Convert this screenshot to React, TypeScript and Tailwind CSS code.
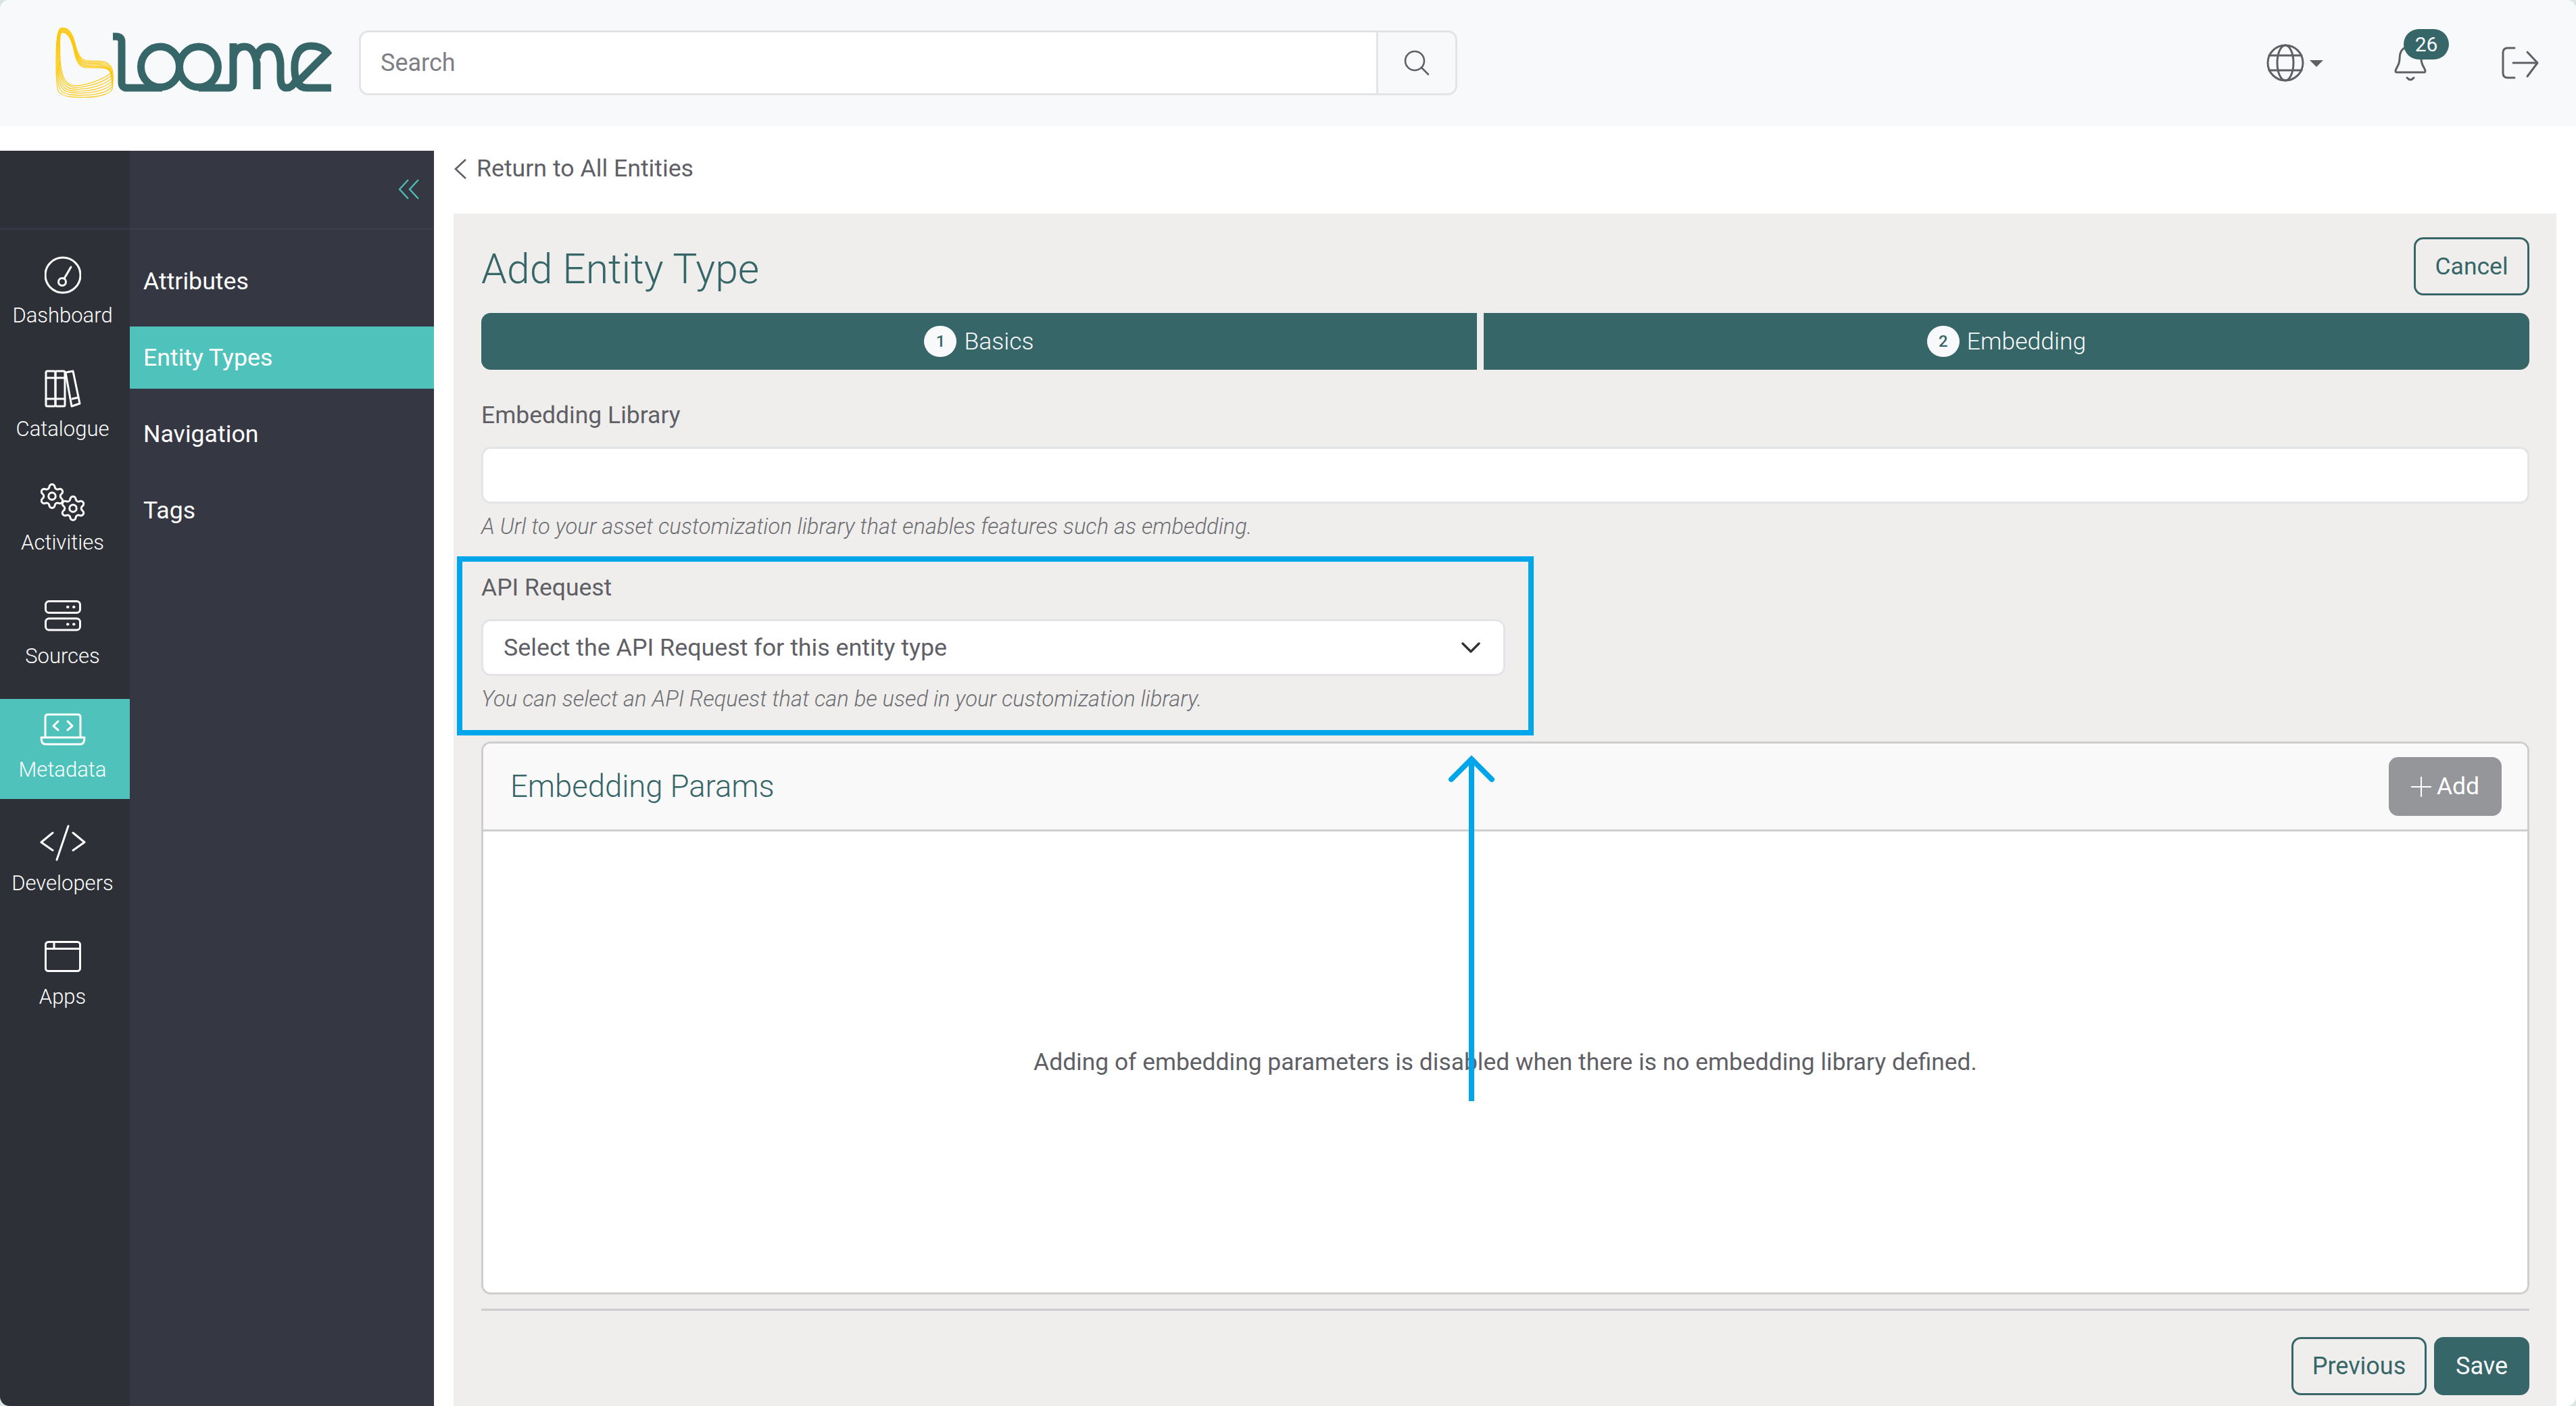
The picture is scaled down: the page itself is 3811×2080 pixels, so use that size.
import React from "react";
import { Settings } from "lucide-react";

const mix = (a: number[], b: number[], t: number) => a.map((v, i) => +(v + (b[i] - v) * t).toFixed(1));
const A = [92,39, 84,39,83,60,83,95, 83,115,84,125,86,133, 92,142,110,142,125,142, 150,142,165,135,166,130, 168,115,168,105,165,98, 160,88,150,88,135,88, 122,88,118,85,113,70, 108,50,104,39,92,39];
const B = [92,46, 88,46,88,58,89,85, 90,105,95,122,107,124, 112,125,118,125,125,123, 140,120,155,113,165,106, 163,102,160,100,155,99, 150,98,140,98,128,98, 118,98,113,90,110,75, 106,55,100,46,92,46];
const ribbon = (t: number) => {
  const p = mix(A, B, t);
  let d = `M${p[0]} ${p[1]}`;
  for (let i = 2; i < p.length; i += 6) d += `C${p[i]} ${p[i + 1]} ${p[i + 2]} ${p[i + 3]} ${p[i + 4]} ${p[i + 5]}`;
  return d + "Z";
};

function Logo() {
  return (
    <svg width="420" height="110" viewBox="80 36 420 110" fill="none" className="shrink-0">
      {[0, 0.17, 0.34, 0.5, 0.67, 0.84, 1].map((t) => (
        <path key={t} d={ribbon(t)} stroke="#fdc600" strokeWidth="1.1" />
      ))}
      <g stroke="#366668" strokeWidth="11" strokeLinecap="butt">
        <path d="M167 52H172Q180 52 180 60V120Q180 128 188 128H240" />
        <ellipse cx="237" cy="97" rx="28.5" ry="30" />
        <ellipse cx="294" cy="97" rx="28.5" ry="30" />
        <path d="M294 128H338Q345 128 345 120V62" />
        <path d="M345 84Q348 67 362 67T380 92V130" />
        <path d="M380 84Q383 67 398 67T415 92V112Q415 128 424 128Q432 128 437 118" />
        <path d="M443 117L484 76Q476 66 460 66Q439 66 436 92Q434 128 454 128H490" />
      </g>
    </svg>
  );
}

const stroke = { fill: "none", stroke: "currentColor", strokeWidth: 3, strokeLinecap: "round", strokeLinejoin: "round" } as const;

function DashIcon() {
  return (
    <svg width="54" height="56" viewBox="0 0 54 56" {...stroke}>
      <circle cx="27" cy="28" r="26" />
      <circle cx="26" cy="38" r="5.5" />
      <path d="M29 33L39 16" />
    </svg>
  );
}
function BooksIcon() {
  return (
    <svg width="54" height="56" viewBox="0 0 54 56" {...stroke}>
      <rect x="2" y="2" width="14" height="52" rx="2" />
      <rect x="16" y="2" width="14" height="52" rx="2" />
      <path d="M2 12H30M2 43H30" />
      <path d="M31 4L42 2L52 50L40 54Z" />
      <path d="M41 43L50 41" />
    </svg>
  );
}
function GearsIcon() {
  return (
    <svg width="68" height="56" viewBox="0 0 68 56" {...stroke}>
      <Settings x="-3" y="-2" width="42" height="42" strokeWidth="1.7" />
      <Settings x="28" y="16" width="42" height="42" strokeWidth="1.7" />
    </svg>
  );
}
function ServerIcon() {
  return (
    <svg width="54" height="46" viewBox="0 0 54 46" {...stroke}>
      <rect x="1.5" y="1.5" width="51" height="17" rx="5" />
      <rect x="1.5" y="27" width="51" height="17" rx="5" />
      <path d="M34 10H34.5M43 10H43.5M34 35.5H34.5M43 35.5H43.5" strokeWidth="4" />
    </svg>
  );
}
function LaptopIcon() {
  return (
    <svg width="68" height="48" viewBox="0 0 68 48" {...stroke}>
      <path d="M8 34V6Q8 2 12 2H56Q60 2 60 6V34" />
      <path d="M2 36H66Q66 46 60 46H8Q2 46 2 36Z" />
      <path d="M27 12L20 19L27 25M41 12L48 19L41 25" />
    </svg>
  );
}
function CodeIcon() {
  return (
    <svg width="68" height="54" viewBox="0 0 68 54" {...stroke}>
      <path d="M19 12L2 26L19 38M49 12L66 26L49 38M42 2L25 52" />
    </svg>
  );
}
function AppsIcon() {
  return (
    <svg width="54" height="46" viewBox="0 0 54 46" {...stroke}>
      <rect x="1.5" y="1.5" width="51" height="43" rx="4" />
      <path d="M1.5 11.5H52.5M14 1.5V11.5" />
    </svg>
  );
}

const rail = [
  { label: "Dashboard", Icon: DashIcon },
  { label: "Catalogue", Icon: BooksIcon },
  { label: "Activities", Icon: GearsIcon },
  { label: "Sources", Icon: ServerIcon },
  { label: "Metadata", Icon: LaptopIcon, active: true },
  { label: "Developers", Icon: CodeIcon },
  { label: "Apps", Icon: AppsIcon },
];
const sub = ["Attributes", "Entity Types", "Navigation", "Tags"];

function Step({ n, label, className }: { n: number; label: string; className: string }) {
  return (
    <div className={`h-full flex items-center justify-center gap-[11px] bg-[#366668] text-[#f8f9fb] text-[35.5px] font-light ${className}`}>
      <span className="w-[48px] h-[46px] rounded-full bg-[#f8f9fb] text-[#366668] text-[24px] font-medium flex items-center justify-center">{n}</span>
      <span className="pt-[2px]">{label}</span>
    </div>
  );
}

export default function App() {
  return (
    <div className="w-full h-[2080px] bg-[#dbe5e6]">
      <div className="h-full rounded-[14px] bg-white overflow-hidden flex flex-col text-[#5f6066] font-['Roboto',sans-serif]">
        <header className="h-[186px] shrink-0 bg-[#f8f9fb] flex items-center pl-[80px] pr-[54px]">
          <Logo />
          <div className="ml-[31px] w-[1625px] h-[96px] rounded-[14px] border-[3px] border-[#e3e4e8] flex items-stretch overflow-hidden">
            <div className="flex-1 pl-[29px] bg-white flex items-center text-[36px] font-normal text-[#7f8085]">Search</div>
            <div className="w-[117px] border-l-[3px] border-[#e3e4e8] flex items-center justify-center">
              <svg width="38" height="38" viewBox="0 0 38 38" fill="none" stroke="#5f6066" strokeWidth="2.6" strokeLinecap="round">
                <circle cx="16" cy="16" r="14" />
                <path d="M26 26L36 36" />
              </svg>
            </div>
          </div>
          <div className="ml-auto flex items-center">
            <svg width="56" height="56" viewBox="0 0 56 56" {...stroke}>
              <circle cx="28" cy="28" r="26" />
              <ellipse cx="28" cy="28" rx="12" ry="26" />
              <path d="M4 17H52M4 39H52" />
            </svg>
            <svg width="20" height="10" viewBox="0 0 20 10" className="ml-[8px] mt-[2px]">
              <path d="M0 0H20L10 10Z" fill="#5f6066" />
            </svg>
            <div className="relative ml-[105px] w-[48px] h-[56px]">
              <svg width="48" height="56" viewBox="0 0 48 56" {...stroke}>
                <path d="M8 22Q8 4 24 4Q40 4 40 22C40 32 46 36 46 40Q46 42 44 42H4Q2 42 2 40C2 36 8 32 8 22Z" />
                <path d="M19 50Q24 56 29 50" />
              </svg>
              <span className="absolute left-[14px] top-[-22px] w-[67px] h-[45px] rounded-full bg-[#366668] text-[#f8f9fb] text-[30px] flex items-center justify-center">26</span>
            </div>
            <svg width="56" height="48" viewBox="0 0 56 48" className="ml-[111px]" {...stroke}>
              <path d="M19 2H9Q2 2 2 9V39Q2 46 9 46H19" />
              <path d="M17 24H52M38 8L53 24L38 44" />
            </svg>
          </div>
        </header>

        <div className="flex-1 min-h-0 mt-[37px] flex">
          <aside className="w-[642px] shrink-0 flex text-white">
            <div className="w-[192px] bg-[#2e3038] flex flex-col">
              <div className="h-[117px] shrink-0 border-b-[3px] border-[#353843]" />
              <nav className="pt-[18px] flex flex-col gap-[20px]">
                {rail.map(({ label, Icon, active }) => (
                  <div key={label} className={`h-[148px] pr-[7px] flex flex-col items-center ${active ? "bg-[#4fc3bb] mt-[4px] -mb-[4px] pt-[17px]" : "pt-[21px]"}`}>
                    <div className="h-[56px] flex items-center justify-center"><Icon /></div>
                    <div className="mt-[12px] text-[31px] font-light leading-[40px]">{label}</div>
                  </div>
                ))}
              </nav>
            </div>
            <div className="flex-1 bg-[#353843] flex flex-col">
              <div className="h-[117px] shrink-0 border-b-[3px] border-[#3a3d48] flex items-start justify-end pt-[42px] pr-[22px]">
                <svg width="30" height="30" viewBox="0 0 30 30" fill="none" stroke="#4fc3bb" strokeWidth="2.2">
                  <path d="M14 1L1 15L14 29M29 1L16 15L29 29" />
                </svg>
              </div>
              <nav className="pt-[30px] flex flex-col gap-[21px]">
                {sub.map((s) => (
                  <div key={s} className={`h-[92px] pl-[20px] pt-[2px] flex items-center text-[35.7px] ${s === "Entity Types" ? "bg-[#4fc3bb]" : ""}`}>{s}</div>
                ))}
              </nav>
            </div>
          </aside>

          <main className="flex-1 min-w-0 pl-[29px] pr-[29px] flex flex-col">
            <div className="h-[93px] shrink-0 pb-[40px] flex items-center text-[35.7px] font-normal">
              <svg width="20" height="30" viewBox="0 0 20 30" fill="none" stroke="#5f6066" strokeWidth="2.6" className="mr-[14px]">
                <path d="M18 1L3 15L18 29" />
              </svg>
              Return to All Entities
            </div>
            <section className="relative flex-1 bg-[#efeeec] pr-[40px] pl-[41px] flex flex-col">
              <div className="mt-[35px] h-[86px] flex items-center justify-between">
                <h1 className="pt-[10px] text-[60.7px] font-light text-[#366668] leading-none">Add Entity Type</h1>
                <button className="w-[171px] h-[86px] pt-[2px] rounded-[14px] border-[3px] border-[#366668] text-[#366668] text-[35.5px]">Cancel</button>
              </div>
              <div className="mt-[26px] h-[84px] flex gap-[10px]">
                <Step n={1} label="Basics" className="w-[1473px] rounded-l-[14px]" />
                <Step n={2} label="Embedding" className="flex-1 rounded-r-[14px]" />
              </div>
              <label className="mt-[47px] h-[40px] leading-[40px] text-[35.5px]">Embedding Library</label>
              <div className="mt-[27px] h-[84px] rounded-[14px] border-[3px] border-[#e3e4e8] bg-white" />
              <p className="mt-[14px] h-[40px] leading-[40px] text-[32.7px] italic font-light text-[#6d6e73]">A Url to your asset customization library that enables features such as embedding.</p>

              <label className="mt-[50px] h-[40px] leading-[40px] text-[35.5px]">API Request</label>
              <div className="mt-[27px] h-[84px] w-[1515px] rounded-[14px] border-[3px] border-[#e3e4e8] bg-white flex items-center pl-[30px] pr-[34px] text-[35.8px] justify-between">
                <span className="pt-[2px]">Select the API Request for this entity type</span>
                <svg width="28" height="16" viewBox="0 0 28 16" fill="none" stroke="#333" strokeWidth="3.5" strokeLinecap="round" strokeLinejoin="round">
                  <path d="M2 2L14 14L26 2" />
                </svg>
              </div>
              <p className="mt-[14px] h-[40px] leading-[40px] text-[32.7px] italic font-light text-[#6d6e73]">You can select an API Request that can be used in your customization library.</p>

              <div className="mt-[43px] h-[818px] rounded-[14px] border-[3px] border-[#cecece] bg-white flex flex-col overflow-hidden">
                <div className="h-[130px] shrink-0 bg-[#f9f9f9] border-b-[3px] border-[#cecece] flex items-center justify-between pl-[40px] pr-[38px]">
                  <h2 className="pt-[2px] text-[45.4px] font-light text-[#366668]">Embedding Params</h2>
                  <button className="w-[167px] h-[87px] rounded-[14px] bg-[#959699] text-white text-[35.5px] flex items-center justify-center gap-[8px]">
                    <svg width="30" height="30" viewBox="0 0 30 30" stroke="white" strokeWidth="2"><path d="M15 0V30M0 15H30" /></svg>
                    Add
                  </button>
                </div>
                <div className="flex-1 pt-[1px] flex items-center justify-center text-[35.4px]">Adding of embedding parameters is disabled when there is no embedding library defined.</div>
              </div>
              <div className="mt-[21px] h-[3px] shrink-0 bg-[#cdcbce]" />
              <div className="mt-[39px] flex justify-end gap-[11px]">
                <button className="w-[200px] h-[86px] rounded-[14px] border-[3px] border-[#366668] text-[#366668] text-[36px]">Previous</button>
                <button className="w-[141px] h-[86px] rounded-[14px] bg-[#366668] text-[#f8f9fb] text-[36px]">Save</button>
              </div>

              <div className="absolute left-[5px] top-[507px] w-[1593px] h-[265px] border-[8px] border-[#00a6e9] pointer-events-none" />
              <svg width="80" height="520" viewBox="0 0 80 520" fill="none" stroke="#00a6e9" strokeWidth="8" className="absolute left-[1466px] top-[800px] pointer-events-none">
                <path d="M40 6V513" />
                <path d="M10 37L40 7L70 37" strokeLinecap="round" />
              </svg>
            </section>
          </main>
        </div>
      </div>
    </div>
  );
}
